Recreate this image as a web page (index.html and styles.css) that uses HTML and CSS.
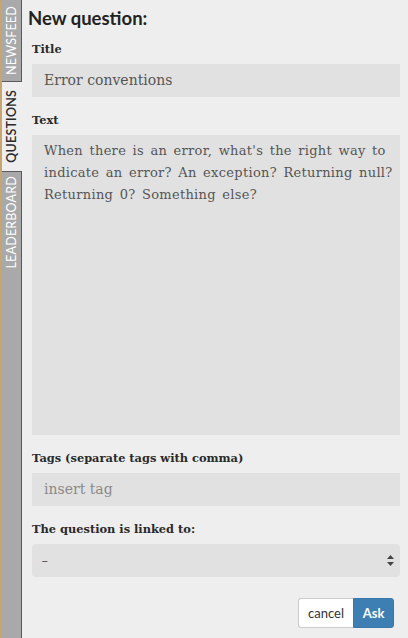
FILE: index.html
```html
<!DOCTYPE html>
<html>
<head>
<meta charset="utf-8">
<link rel="stylesheet" href="styles.css">
</head>
<body>
<div class="app">
  <nav class="sidebar">
    <div class="tab tab-newsfeed"><span class="tab-label">NEWSFEED</span></div>
    <div class="tab tab-active tab-questions"><span class="tab-label">QUESTIONS</span></div>
    <div class="tab tab-leaderboard"><span class="tab-label">LEADERBOARD</span></div>
    <div class="tab-filler"></div>
  </nav>
  <main class="main">
    <h1 class="heading">New question:</h1>
    <form class="form">
      <label class="label">Title</label>
      <div class="field field-input">Error conventions</div>
      <label class="label label-gap">Text</label>
      <div class="field field-textarea">When there is an error, what's the right way to<br>indicate an error? An exception? Returning null?<br>Returning 0? Something else?</div>
      <label class="label label-gap">Tags (separate tags with comma)</label>
      <div class="field field-input field-placeholder">insert tag</div>
      <label class="label label-gap">The question is linked to:</label>
      <div class="field field-select">
        <span class="select-value">–</span>
        <span class="select-arrows">
          <svg width="7" height="11" viewBox="0 0 7 11"><path d="M3.5 0 L7 4 L0 4 Z" fill="#444"/><path d="M0 7 L7 7 L3.5 11 Z" fill="#444"/></svg>
        </span>
      </div>
      <div class="actions">
        <div class="btn-group">
          <button type="button" class="btn btn-cancel">cancel</button>
          <button type="button" class="btn btn-ask">Ask</button>
        </div>
      </div>
    </form>
  </main>
</div>
</body>
</html>
```

FILE: styles.css
```css
html, body {
  margin: 0;
  padding: 0;
  background: #eeeeee;
}
.app {
  display: flex;
  width: 408px;
  height: 638px;
  overflow: hidden;
}
.sidebar {
  width: 20px;
  flex: none;
  display: flex;
  flex-direction: column;
  border-left: 2px solid #c8a46e;
}
.tab {
  flex: none;
  display: flex;
  align-items: center;
  justify-content: center;
  background: #a9a9a9;
  border-right: 1px solid #5a5a5a;
  width: 19px;
  box-sizing: content-box;
}
.tab-newsfeed {
  height: 81px;
  border-bottom: 1px solid #5a5a5a;
}
.tab-active {
  background: #eeeeee;
  border-right: 1px solid #eeeeee;
  height: 89px;
}
.tab-leaderboard {
  height: 100px;
  border-top: 1px solid #5a5a5a;
}
.tab-filler {
  flex: 1;
  background: #a9a9a9;
  border-right: 1px solid #5a5a5a;
  width: 19px;
}
.tab-label {
  writing-mode: vertical-rl;
  transform: rotate(180deg);
  font-family: Lato, "Liberation Sans", sans-serif;
  font-size: 12.5px;
  line-height: 14px;
  letter-spacing: 0.2px;
  color: #ffffff;
  white-space: nowrap;
}
.tab-active .tab-label {
  color: #2a2a2a;
  font-weight: 600;
}
.main {
  flex: 1;
  padding: 6px 8px 0 6px;
  min-width: 0;
}
.heading {
  margin: 0;
  font-family: Lato, "Liberation Sans", sans-serif;
  font-weight: 700;
  font-size: 18.5px;
  line-height: 24px;
  color: #222222;
}
.form {
  display: flex;
  flex-direction: column;
  padding-left: 4px;
  margin-top: 10px;
}
.label {
  font-family: "DejaVu Serif", "Liberation Serif", serif;
  font-weight: 700;
  font-size: 11.4px;
  line-height: 18px;
  color: #2a2a2a;
  margin-bottom: 6px;
}
.label-gap {
  margin-top: 14px;
}
.field {
  background: #e1e1e1;
  font-family: "DejaVu Serif", "Liberation Serif", serif;
  font-size: 14px;
  color: #555555;
  box-sizing: border-box;
}
.field-input {
  height: 33px;
  line-height: 33px;
  padding: 0 12px;
}
.field-placeholder {
  color: #8a8a8a;
}
.field-textarea {
  height: 300px;
  font-size: 13px;
  line-height: 22px;
  letter-spacing: 0.3px;
  word-spacing: 2px;
  padding: 5px 0 5px 12px;
  white-space: nowrap;
  overflow: hidden;
}
.field-select {
  height: 33px;
  border-radius: 4px;
  display: flex;
  align-items: center;
  justify-content: space-between;
  padding: 0 6px 0 9px;
}
.select-value {
  color: #555555;
  font-family: Lato, "Liberation Sans", sans-serif;
  font-size: 13px;
}
.select-arrows {
  display: flex;
}
.actions {
  display: flex;
  justify-content: flex-end;
  margin-top: 21px;
  padding-right: 6px;
}
.btn-group {
  display: flex;
}
.btn {
  font-family: Lato, "Liberation Sans", sans-serif;
  font-size: 13px;
  height: 30px;
  margin: 0;
  cursor: pointer;
}
.btn-cancel {
  background: #ffffff;
  color: #333333;
  border: 1px solid #cccccc;
  border-right: none;
  border-radius: 3px 0 0 3px;
  width: 55px;
  padding: 0;
}
.btn-ask {
  background: #3d7fb3;
  color: #ffffff;
  font-weight: 700;
  border: 1px solid #3a79aa;
  border-radius: 0 3px 3px 0;
  width: 41px;
  padding: 0;
}
```
